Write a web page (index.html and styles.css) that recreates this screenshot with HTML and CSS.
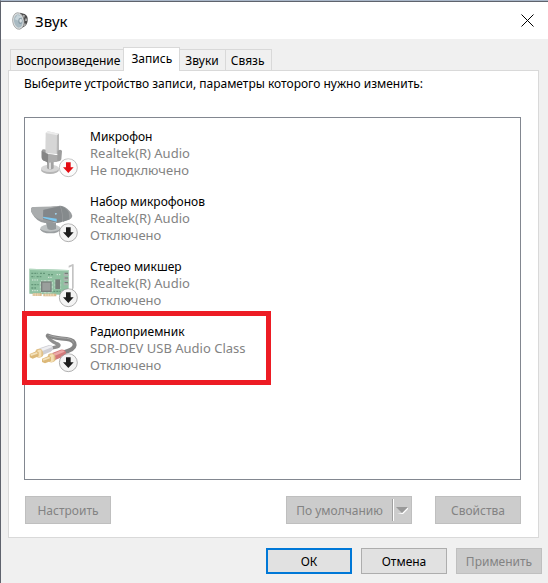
FILE: index.html
```html
<!DOCTYPE html>
<html lang="ru">
<head>
    <meta charset="UTF-8">
    <meta name="viewport" content="width=device-width, initial-scale=1.0">
    <title>Звук</title>
    <link rel="stylesheet" href="styles.css">
</head>
<body>
    <!-- Status badges shared by the device icons -->
    <svg class="sprites" aria-hidden="true">
        <symbol id="badge-off" viewBox="0 0 60 60">
            <circle cx="30" cy="28" r="27" fill="#f4f4f4" stroke="#8c8c8c" stroke-width="2"/>
            <path d="M23 12h14v15h9L30 44 14 27h9z" fill="#1c1c1c"/>
        </symbol>
        <symbol id="badge-missing" viewBox="0 0 60 60">
            <circle cx="30" cy="28" r="27" fill="#fbfbfb" stroke="#a3a3a3" stroke-width="2"/>
            <path d="M23 12h14v15h9L30 44 14 27h9z" fill="#e30b12"/>
        </symbol>
    </svg>

    <div class="window">
        <header class="titlebar">
            <svg class="app-icon" viewBox="0 0 48 54">
                <path d="M24 2l14 4c8 4 10 12 9 20-1 9-5 14-11 18l-14 8z" fill="#4b4b4b"/>
                <path d="M33 8l6 2-2 7-6-2zM40 19l6 1-1 7-6 0zM36 34l7 1-5 8-5-2z" fill="#a9a9a9"/>
                <ellipse cx="19" cy="27" rx="17" ry="25" fill="#d9dcdd" stroke="#8d9091" stroke-width="2" transform="rotate(-8 19 27)"/>
                <ellipse cx="19" cy="27" rx="13" ry="20" fill="#a9bac2" transform="rotate(-8 19 27)"/>
                <path d="M8 22l8-13 12 4-6 14z" fill="#c8d5db"/>
                <ellipse cx="25" cy="27" rx="6" ry="9" fill="#8699a3"/>
                <ellipse cx="26" cy="26" rx="4" ry="6" fill="#d5dee2"/>
            </svg>
            <h1>Звук</h1>
            <button class="close" type="button" aria-label="Закрыть">
                <svg viewBox="0 0 13 13"><path d="M0.5 0.5l12 12M12.5 0.5l-12 12" stroke="#000" fill="none"/></svg>
            </button>
        </header>

        <main class="content">
            <div class="tabs" role="tablist">
                <button class="tab" type="button" role="tab">Воспроизведение</button>
                <button class="tab active" type="button" role="tab" aria-selected="true">Запись</button>
                <button class="tab" type="button" role="tab">Звуки</button>
                <button class="tab" type="button" role="tab">Связь</button>
            </div>

            <section class="panel">
                <p class="hint">Выберите устройство записи, параметры которого нужно изменить:</p>

                <ul class="devices">
                    <li class="device">
                        <svg class="device-icon" viewBox="0 0 156 156">
                            <ellipse cx="66" cy="126" rx="27" ry="12" fill="#b5b5b5"/>
                            <ellipse cx="66" cy="121" rx="27" ry="11" fill="#d6d6d6"/>
                            <path d="M57 96h20v25q-9 7-20 0z" fill="#a3a3a3"/>
                            <path d="M63 98h6v26h-6z" fill="#dcdcdc"/>
                            <path d="M53 15l7-5 33 7v62l-41-4z" fill="#d6d6d6"/>
                            <path d="M53 15l7-5 33 7-6 5z" fill="#ececec"/>
                            <path d="M87 22l6-5v60h-7z" fill="#b8b8b8"/>
                            <path d="M41 68q1-4 7-4l5 1v13l35 4 1-14 7-3q6 0 6 5l-2 24q-1 5-7 6l-28 3-20-8q-4-3-4-8z" fill="#9d9d9d"/>
                            <path d="M41 69l20 9-1 26-15-7q-4-3-4-8z" fill="#858585"/>
                            <path d="M61 78l27 4v19l-28 3z" fill="#acacac"/>
                            <use href="#badge-missing" x="91" y="91" width="60" height="60"/>
                        </svg>
                        <div class="device-info">
                            <div class="device-name">Микрофон</div>
                            <div>Realtek(R) Audio</div>
                            <div>Не подключено</div>
                        </div>
                    </li>
                    <li class="device">
                        <svg class="device-icon" viewBox="0 0 156 156">
                            <ellipse cx="67" cy="109" rx="30" ry="12" fill="#9b9fa1"/>
                            <ellipse cx="67" cy="105" rx="30" ry="11" fill="#bfc3c4"/>
                            <path d="M52 82l32 8v18q-15 6-25 0z" fill="#94999b"/>
                            <path d="M9 46q3-4 9-4l50-1 30-3q14 1 26 15 8 7 9 16-1 8-9 11l-28 8-45 2q-26-4-38-28-6-8-4-16z" fill="#999c9e"/>
                            <path d="M9 46q3-4 9-4l50-1 30-3-52 12-1 32q-20-5-32-19-6-9-4-17z" fill="#a9acad"/>
                            <path d="M46 51l50-11q8 22 6 47l-14 3-43-13z" fill="#83878a"/>
                            <path d="M46 71l40 6v9l-41-11z" fill="#7cc9f1"/>
                            <path d="M98 39q15 4 24 19l2 21-20 8q2-26-6-48z" fill="#858a8c"/>
                            <path d="M81 63l5-1" stroke="#a6dcf8" stroke-width="4"/>
                            <use href="#badge-off" x="91" y="91" width="60" height="60"/>
                        </svg>
                        <div class="device-info">
                            <div class="device-name">Набор микрофонов</div>
                            <div>Realtek(R) Audio</div>
                            <div>Отключено</div>
                        </div>
                    </li>
                    <li class="device">
                        <svg class="device-icon" viewBox="0 0 156 156">
                            <path d="M122 23l11-4v-1l4 1v70l-5 12v-76l-10 4z" fill="#c3c3c3"/>
                            <path d="M4 32l118 4v75l-68-2-50-2z" fill="#8fc1a1"/>
                            <path d="M4 32l118 4v4L4 36z" fill="#b4d8c0"/>
                            <path d="M14 106h27v8H14zM46 107h39v8H46z" fill="#d9b98b"/>
                            <path d="M18 106v8M23 106v8M28 106v8M33 106v8M52 107v8M57 107v8M62 107v8M67 107v8M72 107v8M77 107v8" stroke="#f2e5cd" stroke-width="2"/>
                            <path d="M39 70h32v32H39z" fill="#7a817d"/>
                            <path d="M43 74h24v24H43z" fill="#9a9f9c"/>
                            <path d="M40 68h30M40 104h30M37 72v28M73 72v28" stroke="#dce8df" stroke-width="3" stroke-dasharray="2 2"/>
                            <path d="M82 64h14v29H82z" fill="#777f7a"/>
                            <path d="M80 66v26M98 66v26" stroke="#d6e5da" stroke-width="2" stroke-dasharray="2 2"/>
                            <path d="M10 46h20M36 46h16M10 56h10M26 56h14M60 50h16M10 80h22M10 90h14M76 100h22" stroke="#649779" stroke-width="4" stroke-dasharray="6 3"/>
                            <path d="M12 66h20M12 98h18M86 50h12M60 58h12" stroke="#dceadf" stroke-width="3" stroke-dasharray="4 3"/>
                            <path d="M107 44h14v10h-14zM107 58h14v10h-14zM107 72h14v10h-14z" fill="#acb4af"/>
                            <path d="M110 46h10M110 60h10M110 74h10" stroke="#6b746e" stroke-width="3"/>
                            <use href="#badge-off" x="91" y="91" width="60" height="60"/>
                        </svg>
                        <div class="device-info">
                            <div class="device-name">Стерео микшер</div>
                            <div>Realtek(R) Audio</div>
                            <div>Отключено</div>
                        </div>
                    </li>
                    <li class="device marked">
                        <svg class="device-icon" viewBox="0 0 156 156">
                            <path d="M58 39q8 14 26 22 12 4 8 8-6 4-24 6" fill="none" stroke="#8f8f8f" stroke-width="10" stroke-linecap="round"/>
                            <path d="M60 38q22 8 56 10 24 3 24 18-1 14-34 22" fill="none" stroke="#868686" stroke-width="12" stroke-linecap="round"/>
                            <path d="M62 37q22 8 54 9 18 2 21 13" fill="none" stroke="#a6a6a6" stroke-width="3"/>
                            <path d="M34 76l29-10q10-2 12 7 1 9-7 13l-31 13z" fill="#cfcfd5"/>
                            <path d="M36 78l28-10q6-1 9 4l-35 14z" fill="#efeff2"/>
                            <path d="M24 80q9-6 18 0 6 9 3 19-9 8-18 4-8-12-3-23z" fill="#e0c088"/>
                            <path d="M29 82q7-4 11 0v18q-5 4-10 2-5-11-1-20z" fill="#f4dfb4"/>
                            <path d="M5 93l20-8 7 3v12l-18 7-9-4z" fill="#dcb878"/>
                            <path d="M7 94l20-7 2 5-20 7z" fill="#f3e1bb"/>
                            <path d="M73 90l25-10q11-2 16 7 0 10-9 14l-29 12z" fill="#d27979"/>
                            <path d="M75 92l25-10q6-1 10 4l-33 14z" fill="#eba9a7"/>
                            <path d="M61 94q9-6 18 0 6 9 3 19-9 8-18 4-8-12-3-23z" fill="#e0c088"/>
                            <path d="M66 96q7-4 11 0v18q-5 4-10 2-5-11-1-20z" fill="#f4dfb4"/>
                            <path d="M42 107l20-8 7 3v12l-18 7-9-4z" fill="#dcb878"/>
                            <path d="M44 108l20-7 2 5-20 7z" fill="#f3e1bb"/>
                            <use href="#badge-off" x="91" y="91" width="60" height="60"/>
                        </svg>
                        <div class="device-info">
                            <div class="device-name">Радиоприемник</div>
                            <div>SDR-DEV USB Audio Class</div>
                            <div>Отключено</div>
                        </div>
                    </li>
                </ul>

                <div class="panel-actions">
                    <button class="btn" type="button" disabled>Настроить</button>
                    <button class="btn btn-split" type="button" disabled>
                        <span class="split-label">По умолчанию</span>
                        <svg class="arrow" viewBox="0 0 14 9"><path d="M2 8l5-1 6-6v2L8 8z" fill="#fff"/><path d="M1 1h12L7 7z" fill="#999"/></svg>
                    </button>
                    <button class="btn" type="button" disabled>Свойства</button>
                </div>
            </section>

            <footer class="dialog-actions">
                <button class="btn btn-default" type="button">ОК</button>
                <button class="btn" type="button">Отмена</button>
                <button class="btn" type="button" disabled>Применить</button>
            </footer>
        </main>
    </div>
</body>
</html>
```
FILE: styles.css
```css
*,
*::after {
    box-sizing: border-box;
}
body {
    margin: 0;
    background: #f0f0f0;
    color: #000;
    font-family: "Noto Sans", "Open Sans", sans-serif;
    font-size: 12px;
    line-height: 17px;
}
button {
    font: inherit;
    color: inherit;
}
.sprites {
    position: absolute;
    width: 0;
    height: 0;
}
.window {
    display: flex;
    flex-direction: column;
    min-height: 100vh;
    border-top: 1px solid #a9b7c9;
    border-left: 1px solid #5f636d;
}
.titlebar {
    display: flex;
    align-items: center;
    height: 38px;
    padding: 0 14px 0 11px;
    border-top: 1px solid #5f636d;
    background: #fff;
}
.app-icon {
    width: 16px;
    height: 18px;
}
.titlebar h1 {
    flex: 1;
    margin: 0 0 0 7px;
    font-size: 15px;
    font-weight: normal;
    line-height: 20px;
}
.close {
    display: flex;
    padding: 0;
    border: none;
    background: none;
}
.close svg {
    width: 13px;
    height: 13px;
}
.content {
    flex: 1;
    padding: 8px 6px 8px 7px;
}

/* Tabs */
.tabs {
    display: flex;
    align-items: flex-end;
    padding-left: 2px;
}
.tab {
    height: 21px;
    padding: 0 6px 0 5px;
    border: 1px solid #d9d9d9;
    border-bottom: none;
    background: #f0f0f0;
    white-space: nowrap;
}
.tab:first-child {
    padding-right: 3px;
}
.tab + .tab {
    border-left: none;
}
.tab.active {
    height: 24px;
    margin: 0 0 -1px -1px;
    padding: 0 7px 2px;
    border-left: 1px solid #d9d9d9;
    background: #fff;
    z-index: 1;
}
.panel {
    margin-right: 3px;
    padding: 4px 17px 13px 15px;
    border: 1px solid #d9d9d9;
    background: #fff;
}
.hint {
    margin: 0;
}

/* Device list */
.devices {
    height: 363px;
    margin: 25px 0 16px;
    padding: 3px 0;
    border: 1px solid #828790;
    list-style: none;
}
.device {
    display: flex;
    gap: 10px;
    padding: 7px 3px;
    color: #838383;
    font-size: 13px;
}
.device-icon {
    width: 52px;
    height: 52px;
    margin-bottom: -1px;
}
.device-name {
    color: #000;
    font-size: 12px;
}
.marked {
    position: relative;
}
/* Red frame round the radio receiver */
.marked::after {
    content: "";
    position: absolute;
    inset: -5px auto -4px -3px;
    width: 249px;
    border: 5px solid #ed1c24;
}

/* Buttons */
.btn {
    width: 86px;
    height: 26px;
    padding: 0;
    border: 1px solid #adadad;
    background: #e1e1e1;
}
.btn:disabled {
    border-color: #bfbfbf;
    background: #ccc;
    color: #838383;
}
.btn-default {
    border: 2px solid #0078d7;
}
.panel-actions {
    display: flex;
    justify-content: space-between;
    padding-left: 1px;
}
.panel-actions .btn {
    height: 28px;
}
.panel-actions .btn-split {
    display: flex;
    align-items: center;
    width: 126px;
    margin: 0 23px 0 auto;
}
.split-label {
    flex: 1;
}
.arrow {
    box-sizing: content-box;
    width: 14px;
    height: 9px;
    padding: 7px 2px 6px;
    border-left: 1px solid #a0a0a0;
    box-shadow: inset 1px 0 #fff;
}
.dialog-actions {
    display: flex;
    justify-content: flex-end;
    gap: 9px;
    margin-top: 10px;
}
```
